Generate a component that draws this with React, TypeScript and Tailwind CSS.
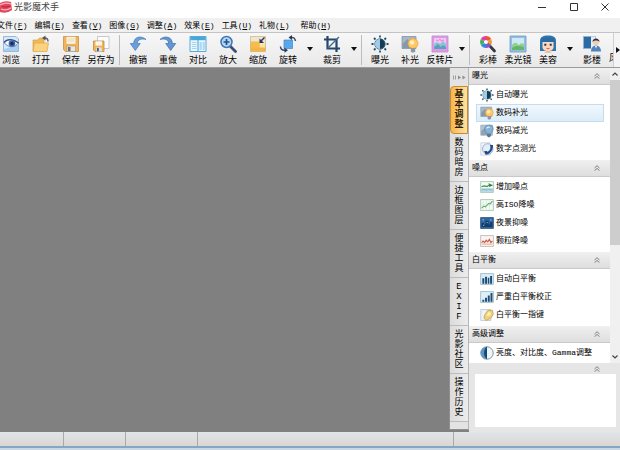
import React from "react";

type IconProps = { className?: string };

function Svg({ className = "size-[18px]", children }: IconProps & { children: React.ReactNode }) {
  return (
    <svg viewBox="0 0 18 18" className={`${className} shrink-0`} aria-hidden="true">
      {children}
    </svg>
  );
}

/* ---------- toolbar drawings ---------- */

const BrowseIcon = () => (
  <Svg>
    <path d="M1.500 1.500h12.500l2.500 2.500v12.500h-15z" fill="#d6e9fa" stroke="#88abd0" strokeWidth=".8" />
    <path d="M2 14l14-4v6H2z" fill="#a9cdf0" />
    <path d="M2 7.500C5 4 11 3.600 16.500 8 13 13 6 13 2 7.500z" fill="#f5faff" stroke="#4a6797" strokeWidth=".8" />
    <path d="M2 7.500C5 3.800 11 3.400 16.500 8" fill="none" stroke="#3a5486" strokeWidth="1.400" />
    <circle cx="10" cy="8.500" r="3.300" fill="#3d62a6" />
    <circle cx="10" cy="8.500" r="1.700" fill="#1b2e5a" />
  </Svg>
);

const OpenIcon = () => (
  <Svg>
    <path d="M1 5h5l1.500-2H12v13H1z" fill="#f0b95a" stroke="#cf9740" strokeWidth=".6" />
    <path d="M1 16.500l1.500-8.500H16.500L15 16.500z" fill="#fbd27d" stroke="#dba64f" strokeWidth=".7" />
    <path d="M16 6.500C16 4 15 3 12.800 3" fill="none" stroke="#666" strokeWidth="1.500" />
    <path d="M13.500.5v5L10 3z" fill="#555" />
  </Svg>
);

const SaveIcon = () => (
  <Svg>
    <path d="M1.500 1.500h15v15h-13l-2-2z" fill="#f1b45c" stroke="#c98f43" strokeWidth=".8" />
    <path d="M4.500 1.800h9v7h-9z" fill="#fdf3df" />
    <path d="M5.500 4h7M5.500 6h7" stroke="#d9cdb8" strokeWidth=".7" />
    <path d="M5 11h8.500v5.500H5z" fill="#e4e8ec" stroke="#a88a5b" strokeWidth=".5" />
    <path d="M6 12h2.500v4H6z" fill="#6b6f78" />
  </Svg>
);

const SaveAsIcon = () => (
  <Svg>
    <path d="M5.500 1.500H17v12H5.500z" fill="#fdfdfd" stroke="#b7bec8" strokeWidth=".8" />
    <path d="M1.500 6h10.500v10.500H3l-1.500-1.500z" fill="#f1b45c" stroke="#bd8a43" strokeWidth=".8" />
    <path d="M3.500 6.300h6.500v4.200H3.500z" fill="#fff8ea" />
    <path d="M4.300 12.500h5.500v4H4.300z" fill="#d9e1e9" />
    <path d="M5 13h1.800v3.300H5z" fill="#4f5a6a" />
  </Svg>
);

const UndoIcon = () => (
  <Svg>
    <path d="M17 4.500C13 .5 5 1 4.600 8.500H1.300L6.300 15.500l5-7H8.300C8.500 4.500 12 3.300 17 4.500z" fill="#6a9fda" stroke="#3f78b8" strokeWidth=".7" />
  </Svg>
);

const RedoIcon = () => (
  <Svg>
    <path d="M1 4.500C5 .5 13 1 13.400 8.500h3.300L11.700 15.500l-5-7h3C9.500 4.500 6 3.300 1 4.500z" fill="#6496d0" stroke="#3a6fae" strokeWidth=".7" />
  </Svg>
);

const CompareIcon = () => (
  <Svg>
    <path d="M1 1.500h16v15H1z" fill="#e9f6fd" stroke="#4d9fd0" strokeWidth=".9" />
    <path d="M1.400 2h15.200v3.200H1.400z" fill="#45a9dc" />
    <path d="M9 2v14.500" stroke="#4d9fd0" strokeWidth="1" />
    <path d="M3 7.500h4.500M3 9.500h4.500M3 11.500h4.500M3 13.500h4.500" stroke="#a8d4ec" />
    <path d="M10.500 7h2.200v8h-2.200zM13.700 7h2v8h-2z" fill="#a8d9f2" />
  </Svg>
);

const ZoomIcon = () => (
  <Svg>
    <path d="M11 11l5.500 5.500" stroke="#3b4f70" strokeWidth="2.800" strokeLinecap="round" />
    <circle cx="7.500" cy="7" r="5.500" fill="#b5d8f5" stroke="#4176b1" strokeWidth="1.500" />
    <path d="M7.500 4v6M4.500 7h6" stroke="#24518d" strokeWidth="1.700" />
  </Svg>
);

const ScaleIcon = () => (
  <Svg>
    <path d="M1.500 1.500h15v15h-15z" fill="#fbe3a6" stroke="#c3a876" strokeWidth=".7" />
    <path d="M1.800 1.800h14.400v7H1.800z" fill="#efe6d0" />
    <path d="M1.800 6.500h9v9.700h-9z" fill="#f6bd4c" />
    <path d="M1.800 12.500h14.400v3.700H1.800z" fill="#f5b545" />
    <path d="M15.500 2.500l-4 4" stroke="#223958" strokeWidth="1.400" />
    <path d="M10.500 3.500V8H15z" fill="#223958" />
  </Svg>
);

const RotateIcon = () => (
  <Svg>
    <path d="M5 5h8.500v8.500H5z" fill="#5aa8ec" stroke="#3d87cc" strokeWidth=".7" />
    <path d="M11.500 2.500c3-.5 4.500.5 5 3.500" fill="none" stroke="#344c6d" strokeWidth="1.500" />
    <path d="M13 0v5L9.500 2.500z" fill="#2a3b55" />
    <path d="M1.500 11.500c0 2.500 1.500 4 4.500 3.800" fill="none" stroke="#344c6d" strokeWidth="1.500" />
    <path d="M5.500 12.700v5l3.500-2.500z" fill="#2a3b55" />
  </Svg>
);

const CropIcon = () => (
  <Svg>
    <path d="M4.500 1v12.500H17M1 4.500h12.500V17" fill="none" stroke="#24476c" strokeWidth="2.200" />
    <path d="M4.500 13.500L16 2" stroke="#3d648c" strokeWidth="1.200" />
  </Svg>
);

const ExposureIcon = ({ className }: IconProps) => (
  <Svg className={className}>
    <path d="M9 .5v2M9 15.500v2M.5 9h2M15.500 9h2M3 3l1.500 1.500M13.500 13.500L15 15M15 3l-1.500 1.500M4.500 13.500L3 15" stroke="#24506d" strokeWidth="1.800" />
    <circle cx="9" cy="9" r="5.200" fill="#eaf7fc" stroke="#2d5e80" strokeWidth=".9" />
    <path d="M9 4a5 5 0 000 10z" fill="#9fcbe4" />
    <path d="M9 4a5 5 0 010 10z" fill="#173a55" />
  </Svg>
);

const FillLightIcon = ({ className }: IconProps) => (
  <Svg className={className}>
    <path d="M1 1.500h14v12H1z" fill="#a8b8c8" stroke="#8394a6" strokeWidth=".8" />
    <path d="M1.500 9l5-5 4 5v4h-9z" fill="#8598ac" />
    <circle cx="12" cy="8.500" r="5" fill="#ffc766" stroke="#ee9f3c" strokeWidth=".8" />
    <circle cx="11" cy="7.500" r="2.200" fill="#fff0bd" />
    <path d="M9.800 13h4.400v3.200l-1 1.300h-2.400l-1-1.300z" fill="#8d98a5" />
  </Svg>
);

const InvertIcon = () => (
  <Svg>
    <path d="M1 1h16v16H1z" fill="#dc9ae5" stroke="#c08bd0" strokeWidth=".8" />
    <path d="M3 3h12v11H3z" fill="#f3c3f1" />
    <path d="M3 9l3-2 3 2 3-3 3 3v5H3z" fill="#86c6d6" />
    <path d="M3 12l4-3 3 3 2-2 3 2v2H3z" fill="#5f9fba" />
    <path d="M5 5l2 1 2-2 1 2 3-1" stroke="#e68fd8" fill="none" />
  </Svg>
);

const ColorWandIcon = () => (
  <Svg>
    <path d="M9 9l6.500 7" stroke="#343844" strokeWidth="2.800" strokeLinecap="round" />
    <path d="M7 7V1a6 6 0 015.200 3z" fill="#f05040" />
    <path d="M7 7l5.200-3a6 6 0 010 6z" fill="#f09b2e" />
    <path d="M7 7l5.200 3A6 6 0 017 13z" fill="#8a55c9" />
    <path d="M7 7v6a6 6 0 01-5.200-3z" fill="#3b86dd" />
    <path d="M7 7l-5.200 3a6 6 0 010-6z" fill="#3bb55d" />
    <path d="M7 7L1.800 4A6 6 0 017 1z" fill="#e13fa1" />
    <circle cx="7" cy="7" r="2" fill="#fff" />
  </Svg>
);

const SoftLensIcon = () => (
  <Svg>
    <path d="M1 1h16v16H1z" fill="#94bfe3" stroke="#6f9ac4" strokeWidth=".8" />
    <path d="M3 3h12v12H3z" fill="#cdebf6" />
    <path d="M3 10c3-4 5-2 7 0 2-2 3-2 5-1v6H3z" fill="#93d08f" />
    <path d="M3 13c4-3 8-2 12-1v3H3z" fill="#62b56b" />
  </Svg>
);

const BeautyIcon = () => (
  <Svg>
    <path d="M1 16V6C1 2 4 .500 9 .500S17 2 17 6v10z" fill="#2d75ae" />
    <path d="M3.500 6.500h11v6C14 15.500 11 16 9 16s-5-.5-5.500-3.500z" fill="#fbd9bf" />
    <path d="M3 3.500C6 2.500 12 2.500 15 3.500V7H3z" fill="#2b6ba3" />
    <path d="M5.300 8.800h2v2h-2zM10.700 8.800h2v2h-2z" fill="#26364a" />
    <path d="M7.500 13.300q1.500 1 3 0" stroke="#d4534f" fill="none" />
    <path d="M5 17.500q4-2.500 8 0z" fill="#e9967a" />
  </Svg>
);

const StudioIcon = () => (
  <Svg>
    <path d="M.500 1.500h12v12H.500z" fill="#2c6aa3" stroke="#8fb2d0" />
    <path d="M8 1.500h4.500v12H8z" fill="#e5eef6" />
    <circle cx="13" cy="7" r="3.200" fill="#f6cfac" />
    <path d="M9.500 7c0-4.700 7-4.700 7 0-1.500-1.700-5-2-7 0z" fill="#27303f" />
    <path d="M8 16.500c0-8 10-8 10 0z" fill="#4f84ba" />
    <path d="M12 10.700h2l-1 3z" fill="#fff" />
  </Svg>
);

/* ---------- panel drawings ---------- */

const DimLightIcon = ({ className }: IconProps) => (
  <Svg className={className}>
    <path d="M1 1.500h15v13H1z" fill="#b4c3d1" stroke="#8c9dae" strokeWidth=".8" />
    <path d="M1.500 9l5-4 4 4v5h-9z" fill="#8fa1b4" />
    <path d="M6 6.500a5.500 5 0 0111 0c0 3-2.500 4-3 6H9c-.5-2-3-3-3-6z" fill="#86b2d8" stroke="#5580aa" strokeWidth=".8" />
    <path d="M9 13h5v2.500L12.500 17h-2L9 15.500z" fill="#667587" />
    <path d="M8.500 5.500q2-2.500 4-1" stroke="#d7efff" strokeWidth="1.500" fill="none" />
  </Svg>
);

const MeterIcon = ({ className }: IconProps) => (
  <Svg className={className}>
    <path d="M1 1h12v16H1z" fill="#edf2f7" stroke="#bcc9d6" strokeWidth=".8" />
    <circle cx="10" cy="9" r="6.800" fill="#e3eef9" stroke="#8ba6c4" />
    <path d="M14.500 4.500c1.500 5-2 10-7.500 10.500" fill="none" stroke="#244c92" strokeWidth="2.800" />
    <path d="M5 12l4.500-.5L8 16zM12.500 4h4v4z" fill="#213d72" />
  </Svg>
);

function Chart({ className, bg = "#f2fbf4", border = "#a1bca8", children }: IconProps & { bg?: string; border?: string; children: React.ReactNode }) {
  return (
    <Svg className={className}>
      <path d="M.800 2h16.400v14H.800z" fill={bg} stroke={border} strokeWidth="1" />
      {children}
    </Svg>
  );
}

const AddNoiseIcon = ({ className }: IconProps) => (
  <Chart className={className}>
    <path d="M1.300 10.500h15.400v5H1.300z" fill="#b9d9e6" />
    <path d="M2 8.500l4-1 3 1 3-2 4 .5" stroke="#3e9650" strokeWidth="1.600" fill="none" />
    <path d="M11 4l5 3-4 2z" fill="#357d43" />
    <path d="M2 13l3-1 3 1 3-1 5 1" stroke="#7ba6b8" fill="none" />
  </Chart>
);

const HighIsoIcon = ({ className }: IconProps) => (
  <Chart className={className}>
    <path d="M4 3v12M8 3v12M12 3v12M1 9h16" stroke="#c6e3cb" strokeWidth=".6" />
    <path d="M2 13l3-2.500 2 1L11 7l2 .5L16 4" stroke="#60a86d" strokeWidth="1.300" fill="none" />
  </Chart>
);

const NightIcon = ({ className }: IconProps) => (
  <Chart className={className} bg="#2f67a0" border="#254d7c">
    <path d="M2 14V9h3v2h2V6h4v5h2V8h3v6z" fill="#163a66" />
    <path d="M3 5h2M13 5h2M8.500 8.500h1.500M4 12h1.500" stroke="#9ad0f3" strokeWidth="1.200" />
  </Chart>
);

const GrainIcon = ({ className }: IconProps) => (
  <Chart className={className} bg="#f9f4f1" border="#b9b1b0">
    <path d="M2 11l2-2 2 2 2-3 2 2 2-3 2 4 2-2" stroke="#c75a43" strokeWidth="1.400" fill="none" />
    <path d="M2 13h14" stroke="#dca896" strokeWidth="1.200" />
  </Chart>
);

const AutoWhiteIcon = ({ className }: IconProps) => (
  <Chart className={className} bg="#d9edf8" border="#93b4c9">
    <path d="M3 8h2.500v7H3zM6.500 6H9v9H6.500zM10 7.500h2V15h-2zM13 5h2.500v10H13z" fill="#1d4c75" />
  </Chart>
);

const WhiteFixIcon = ({ className }: IconProps) => (
  <Chart className={className} bg="#e0f0f9" border="#93b4c9">
    <path d="M3 12.500h2.500V15H3zM6.500 10H9v5H6.500zM10 7h2.500v8H10zM13.500 4H16v11h-2.500z" fill="#1d4c75" />
  </Chart>
);

const WhiteKeyIcon = ({ className }: IconProps) => (
  <Svg className={className}>
    <path d="M1 2h13v14H1z" fill="#eef3f9" stroke="#b5c2d1" />
    <path d="M6 9l4-6h6l1 5-3 5-6 3-3-3z" fill="#f0d07a" stroke="#b88f3a" strokeWidth=".8" />
    <path d="M8 10l3-5 3 1-1 4z" fill="#fff0b7" />
  </Svg>
);

const ContrastIcon = ({ className }: IconProps) => (
  <Svg className={className}>
    <circle cx="9" cy="9" r="8" fill="#eef5fa" stroke="#4a6a88" strokeWidth=".9" />
    <path d="M9 1a8 8 0 000 16z" fill="#5a97c4" />
    <path d="M9 1c-5 3-5 13 0 16z" fill="#1d466f" />
  </Svg>
);

/* ---------- shared parts ---------- */

function ToolButton({ label, icon: Icon }: { label: string; icon: React.ComponentType }) {
  return (
    <button type="button" className="flex w-[30px] shrink-0 flex-col items-center pt-0.5">
      <Icon />
      <span className="text-[9px] leading-4 whitespace-nowrap">{label}</span>
    </button>
  );
}

function DropArrow({ label }: { label: string }) {
  return (
    <button type="button" aria-label={label} className="flex w-[14px] shrink-0 items-center justify-center pb-0.5">
      <svg viewBox="0 0 6 4" className="h-1 w-1.5" aria-hidden="true">
        <path d="M0 0h6L3 4z" fill="#111" />
      </svg>
    </button>
  );
}

const Divider = () => <div className="my-0.5 w-1 shrink-0 border-l border-[#bdbdbd]" />;

function Chevrons() {
  return (
    <svg viewBox="0 0 6 6" className="size-1.5" aria-hidden="true">
      <path d="M.5 3L3 .7 5.500 3M.5 5.700L3 3.400l2.500 2.300" fill="none" stroke="#666" strokeWidth=".8" />
    </svg>
  );
}

const menus = [
  ["文件", "F"],
  ["编辑", "E"],
  ["查看", "V"],
  ["图像", "G"],
  ["调整", "A"],
  ["效果", "E"],
  ["工具", "U"],
  ["礼物", "L"],
  ["帮助", "H"],
];

const tabs = ["基本调整", "数码暗房", "边框图层", "便捷工具", "EXIF", "光影社区", "操作历史"];

const sections: { title: string; items: { label: string; icon: React.ComponentType<IconProps>; active?: boolean }[] }[] = [
  {
    title: "曝光",
    items: [
      { label: "自动曝光", icon: ExposureIcon },
      { label: "数码补光", icon: FillLightIcon, active: true },
      { label: "数码减光", icon: DimLightIcon },
      { label: "数字点测光", icon: MeterIcon },
    ],
  },
  {
    title: "噪点",
    items: [
      { label: "增加噪点", icon: AddNoiseIcon },
      { label: "高ISO降噪", icon: HighIsoIcon },
      { label: "夜景抑噪", icon: NightIcon },
      { label: "颗粒降噪", icon: GrainIcon },
    ],
  },
  {
    title: "白平衡",
    items: [
      { label: "自动白平衡", icon: AutoWhiteIcon },
      { label: "严重白平衡校正", icon: WhiteFixIcon },
      { label: "白平衡一指键", icon: WhiteKeyIcon },
    ],
  },
  {
    title: "高级调整",
    items: [{ label: "亮度、对比度、Gamma调整", icon: ContrastIcon }],
  },
];

function TitleBar() {
  return (
    <header className="flex h-[18px] shrink-0 items-start bg-white">
      <svg viewBox="0 0 12 12" className="mt-px size-3 shrink-0" aria-hidden="true">
        <path d="M0 2q5-3 11-1l1 8q-5 4-12 2z" fill="#e2475b" />
        <path d="M0 4q5-3 11-1M1 8q5 2 10-1" stroke="#f9b3b8" strokeWidth="1.200" fill="none" />
        <path d="M2 5.500q4 1.500 8-.5" stroke="#b32440" strokeWidth="1" fill="none" />
      </svg>
      <h1 className="ml-0.5 text-[9px] leading-4 text-[#444]">光影魔术手</h1>
      <div className="ml-auto flex h-3.5 items-center">
        <button type="button" aria-label="最小化" className="flex w-8 justify-center">
          <svg viewBox="0 0 8 8" className="size-2" aria-hidden="true">
            <path d="M0 4.500h8" stroke="#333" />
          </svg>
        </button>
        <button type="button" aria-label="最大化" className="flex w-8 justify-center">
          <svg viewBox="0 0 8 8" className="size-2" aria-hidden="true">
            <path d="M.5.500h7v7h-7z" fill="none" stroke="#333" />
          </svg>
        </button>
        <button type="button" aria-label="关闭" className="flex w-[30px] justify-center">
          <svg viewBox="0 0 8 8" className="size-2" aria-hidden="true">
            <path d="M.5.500l7 7M7.500.500l-7 7" stroke="#333" />
          </svg>
        </button>
      </div>
    </header>
  );
}

function Toolbar() {
  return (
    <div className="flex h-9 shrink-0 border-y border-t-[#c4c4c4] border-b-[#9a9a9a] bg-linear-to-b from-[#f7f7f7] to-[#e9e9e9]">
      <div role="toolbar" className="-ml-1 flex min-w-0 flex-1 overflow-hidden">
        <ToolButton label="浏览" icon={BrowseIcon} />
        <ToolButton label="打开" icon={OpenIcon} />
        <ToolButton label="保存" icon={SaveIcon} />
        <ToolButton label="另存为" icon={SaveAsIcon} />
        <div className="flex shrink-0 pl-[3px]">
          <Divider />
        </div>
        <ToolButton label="撤销" icon={UndoIcon} />
        <ToolButton label="重做" icon={RedoIcon} />
        <ToolButton label="对比" icon={CompareIcon} />
        <ToolButton label="放大" icon={ZoomIcon} />
        <ToolButton label="缩放" icon={ScaleIcon} />
        <ToolButton label="旋转" icon={RotateIcon} />
        <DropArrow label="旋转选项" />
        <ToolButton label="裁剪" icon={CropIcon} />
        <DropArrow label="裁剪选项" />
        <Divider />
        <ToolButton label="曝光" icon={ExposureIcon} />
        <ToolButton label="补光" icon={FillLightIcon} />
        <ToolButton label="反转片" icon={InvertIcon} />
        <DropArrow label="反转片选项" />
        <Divider />
        <ToolButton label="彩棒" icon={ColorWandIcon} />
        <ToolButton label="柔光镜" icon={SoftLensIcon} />
        <ToolButton label="美容" icon={BeautyIcon} />
        <DropArrow label="美容选项" />
        <ToolButton label="影楼" icon={StudioIcon} />
        <button type="button" className="flex shrink-0 flex-col justify-end pb-[-2px] pl-0.5">
          <span className="text-[9px] leading-4">风</span>
        </button>
      </div>
      <button type="button" aria-label="更多工具" className="flex w-[7px] shrink-0 items-center justify-end border-l border-[#cfcfcf] bg-[#f4f4f4]">
        <svg viewBox="0 0 4 6" className="h-1.5 w-1" aria-hidden="true">
          <path d="M0 0v6l4-3z" fill="#111" />
        </svg>
      </button>
    </div>
  );
}

function SideTabs() {
  return (
    <div role="tablist" aria-orientation="vertical" className="mb-0.5 flex w-5 shrink-0 flex-col border-x border-b border-[#8f8f8f] border-r-[#b5b5b5] bg-[#e3e3e3]">
      <div className="flex h-[18px] shrink-0 items-center justify-center">
        <svg viewBox="0 0 14 5" className="h-[5px] w-3.5" aria-hidden="true">
          <path d="M1.500.500v4M3.500.500v4" stroke="#8c8c8c" strokeWidth=".8" />
          <path d="M6 .500v4l3-2zM10.500.500v4l3-2z" fill="#8c8c8c" />
        </svg>
      </div>
      {tabs.map((tab, i) => (
        <button
          key={tab}
          type="button"
          role="tab"
          aria-selected={i === 0}
          className={
            i === 0
              ? "flex h-12 w-full shrink-0 flex-col items-center justify-center rounded-l border border-[#c88a2e] bg-linear-to-r from-[#f7b64c] to-[#fde2a4] font-bold text-[#2b1a00]"
              : "flex h-12 w-full shrink-0 flex-col items-center justify-center border-b border-[#bcbcbc] bg-linear-to-r from-[#dcdcdc] to-[#ececec]"
          }
        >
          {[...tab].map((c, k) => (
            <span key={k} className="text-[9px] leading-[10px]">
              {c}
            </span>
          ))}
        </button>
      ))}
    </div>
  );
}

function AdjustPanel() {
  return (
    <aside className="flex min-w-0 flex-1 flex-col bg-[#e6e6e6]">
      <div className="flex min-h-0 flex-1">
        <div className="min-w-0 flex-1 overflow-hidden bg-white">
          {sections.map((s) => (
            <section key={s.title} className="pb-0.5">
              <h2>
                <button type="button" aria-expanded="true" className="flex h-[17px] w-full items-center justify-between border-b border-[#c9c9c9] bg-linear-to-b from-[#f0f0f0] to-[#dedede] pr-2.5 pl-[3px]">
                  {s.title}
                  <Chevrons />
                </button>
              </h2>
              <ul className="pt-px pr-1.5 pl-[7px]">
                {s.items.map(({ label, icon: Icon, active }) => (
                  <li key={label}>
                    <button
                      type="button"
                      className={
                        active
                          ? "flex h-[18px] w-full items-center gap-0.5 border border-[#c3dcee] bg-linear-to-b from-[#f1f8fd] to-[#dcecf8] pl-[3px]"
                          : "flex h-[18px] w-full items-center gap-0.5 border border-transparent pl-[3px]"
                      }
                    >
                      <Icon className="size-3.5" />
                      <span className="whitespace-nowrap">{label}</span>
                    </button>
                  </li>
                ))}
              </ul>
            </section>
          ))}
        </div>
        <div className="flex w-2.5 shrink-0 flex-col bg-[#f0f0f0]">
          <button type="button" aria-label="向上滚动" className="flex h-3 items-center justify-center">
            <svg viewBox="0 0 6 4" className="h-1 w-1.5" aria-hidden="true">
              <path d="M.5 3.500L3 1l2.500 2.500" fill="none" stroke="#444" strokeWidth="1.200" />
            </svg>
          </button>
          <div className="flex min-h-0 flex-1 flex-col">
            <div className="h-[61%] bg-[#cdcdcd]" />
          </div>
          <button type="button" aria-label="向下滚动" className="flex h-3 items-center justify-center">
            <svg viewBox="0 0 6 4" className="h-1 w-1.5" aria-hidden="true">
              <path d="M.5.500L3 3 5.500.500" fill="none" stroke="#444" strokeWidth="1.200" />
            </svg>
          </button>
        </div>
      </div>
      <button type="button" aria-label="收起预览" className="flex h-[11px] shrink-0 items-center justify-end pr-5">
        <Chevrons />
      </button>
      <div className="mr-1 mb-[5px] ml-1.5 h-[53px] shrink-0 bg-white" />
    </aside>
  );
}

export default function App() {
  return (
    <div className="flex h-screen flex-col overflow-hidden bg-[#f0f0f0] font-['Liberation_Mono','Noto_Sans_CJK_SC',monospace] text-[8px] text-black">
      <TitleBar />
      <nav className="-ml-[3px] flex h-3.5 shrink-0 items-end gap-[7px] bg-[#f0f0f0] leading-3">
        {menus.map(([name, key]) => (
          <button key={name} type="button" className="whitespace-nowrap last:ml-1">
            {name}(<u>{key}</u>)
          </button>
        ))}
      </nav>
      <Toolbar />
      <main className="flex min-h-0 flex-1 bg-[#808080]">
        <div className="min-w-0 flex-1" />
        <div className="flex w-[171px] shrink-0">
          <SideTabs />
          <AdjustPanel />
        </div>
      </main>
      <footer className="flex h-[18px] shrink-0 flex-col bg-[#c9d7e4]">
        <div className="flex h-3.5 divide-x divide-[#a9a9a9] bg-linear-to-b from-[#dfe5ea] to-[#dcd7d2]">
          <div className="w-16" />
          <div className="w-[62px]" />
          <div className="w-[72px]" />
          <div className="flex-1" />
          <div className="w-[166px]" />
        </div>
        <div className="h-0.5 bg-[#86a7c4]" />
      </footer>
    </div>
  );
}
